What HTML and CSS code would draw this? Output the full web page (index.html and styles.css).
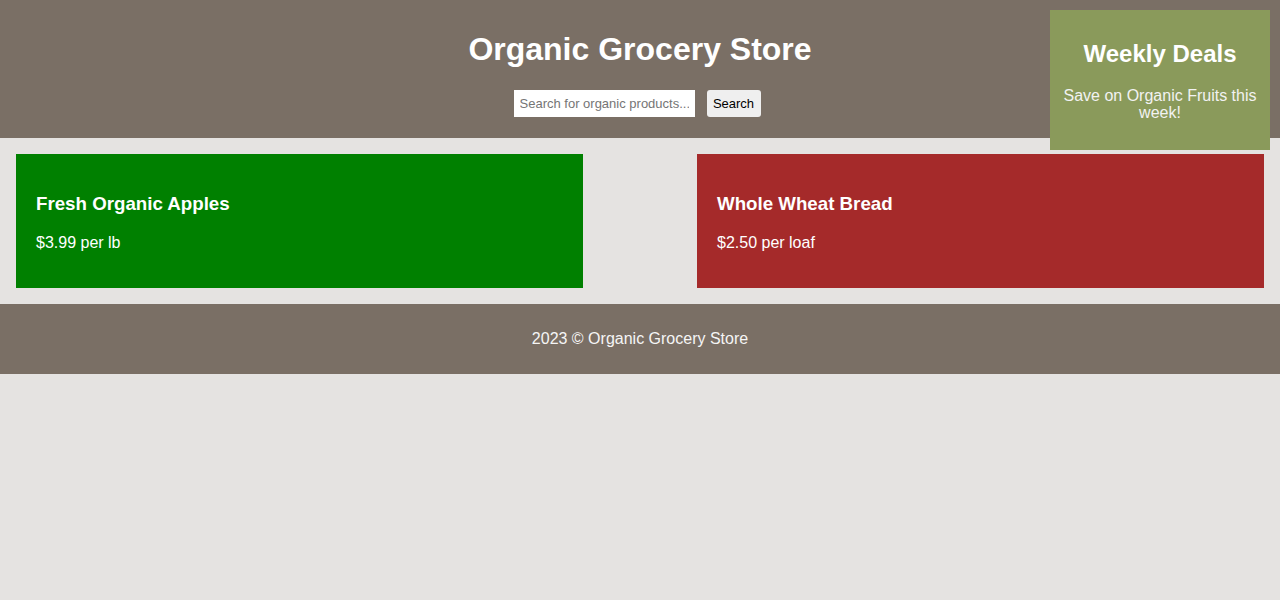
FILE: index.html
```html
<!DOCTYPE html>
<html lang="en">
<head>
<meta charset="utf-8">
<title>Organic Grocery Store</title>
<link rel="stylesheet" href="styles.css">
</head>
<body>
<header class="site-header">
  <h1 class="site-title">Organic Grocery Store</h1>
  <form class="search">
    <input class="search-input" type="text" placeholder="Search for organic products...">
    <button class="search-btn" type="button">Search</button>
  </form>
  <aside class="deals">
    <h2 class="deals-title">Weekly Deals</h2>
    <p class="deals-text">Save on Organic Fruits this week!</p>
  </aside>
</header>
<main class="products">
  <section class="card card-green">
    <h3 class="card-title">Fresh Organic Apples</h3>
    <p class="card-price">$3.99 per lb</p>
  </section>
  <section class="card card-red">
    <h3 class="card-title">Whole Wheat Bread</h3>
    <p class="card-price">$2.50 per loaf</p>
  </section>
</main>
<footer class="site-footer">
  <p class="footer-text">2023 © Organic Grocery Store</p>
</footer>
</body>
</html>
```
FILE: styles.css
```css
* { box-sizing: border-box; }
html, body { margin: 0; }
body {
  font-family: "Liberation Sans", Arial, sans-serif;
  background: #e5e3e1;
  color: #fff;
}
.site-header {
  position: relative;
  background: #7a6f65;
  padding: 10px 10px 21px;
  text-align: center;
}
.site-title {
  font-size: 32px;
  line-height: 37px;
  margin: 21px 0 22px;
}
.search {
  display: flex;
  justify-content: center;
  gap: 12px;
  margin-top: 3px;
  padding-right: 6px;
}
.search-input {
  width: 181px;
  height: 27px;
  border: none;
  padding: 4px 6px;
  font-family: "Liberation Sans", Arial, sans-serif;
  font-size: 13px;
  color: #000;
  background: #fff;
}
.search-input::placeholder { color: #757575; }
.search-btn {
  height: 27px;
  width: 54px;
  padding: 0;
  border: none;
  border-radius: 3px;
  background: #efefef;
  font-family: "Liberation Sans", Arial, sans-serif;
  font-size: 13px;
  color: #000;
}
.deals {
  position: absolute;
  top: 10px;
  right: 10px;
  width: 220px;
  padding: 10px;
  background: #8a9a5b;
  text-align: center;
}
.deals-title {
  font-size: 24px;
  line-height: 27.6px;
  margin: 19.9px 0;
}
.deals-text {
  font-size: 16px;
  line-height: 17px;
  margin: 20px 0 18.5px;
  color: #f2f2f2;
}
.products {
  display: flex;
  justify-content: space-between;
  padding: 16px;
}
.card {
  width: 567px;
  padding: 20px;
}
.card-green { background: #008000; }
.card-red { background: #a52a2a; }
.card-title {
  font-size: 18.72px;
  line-height: 21.5px;
  margin: 18.7px 0 19.7px;
}
.card-price {
  font-size: 16px;
  line-height: 18.4px;
  margin: 16px 0;
}
.site-footer {
  background: #7a6f65;
  padding: 10px;
  text-align: center;
}
.footer-text {
  font-size: 16px;
  line-height: 18px;
  margin: 16px 0;
  color: #f5f5f5;
}
```
